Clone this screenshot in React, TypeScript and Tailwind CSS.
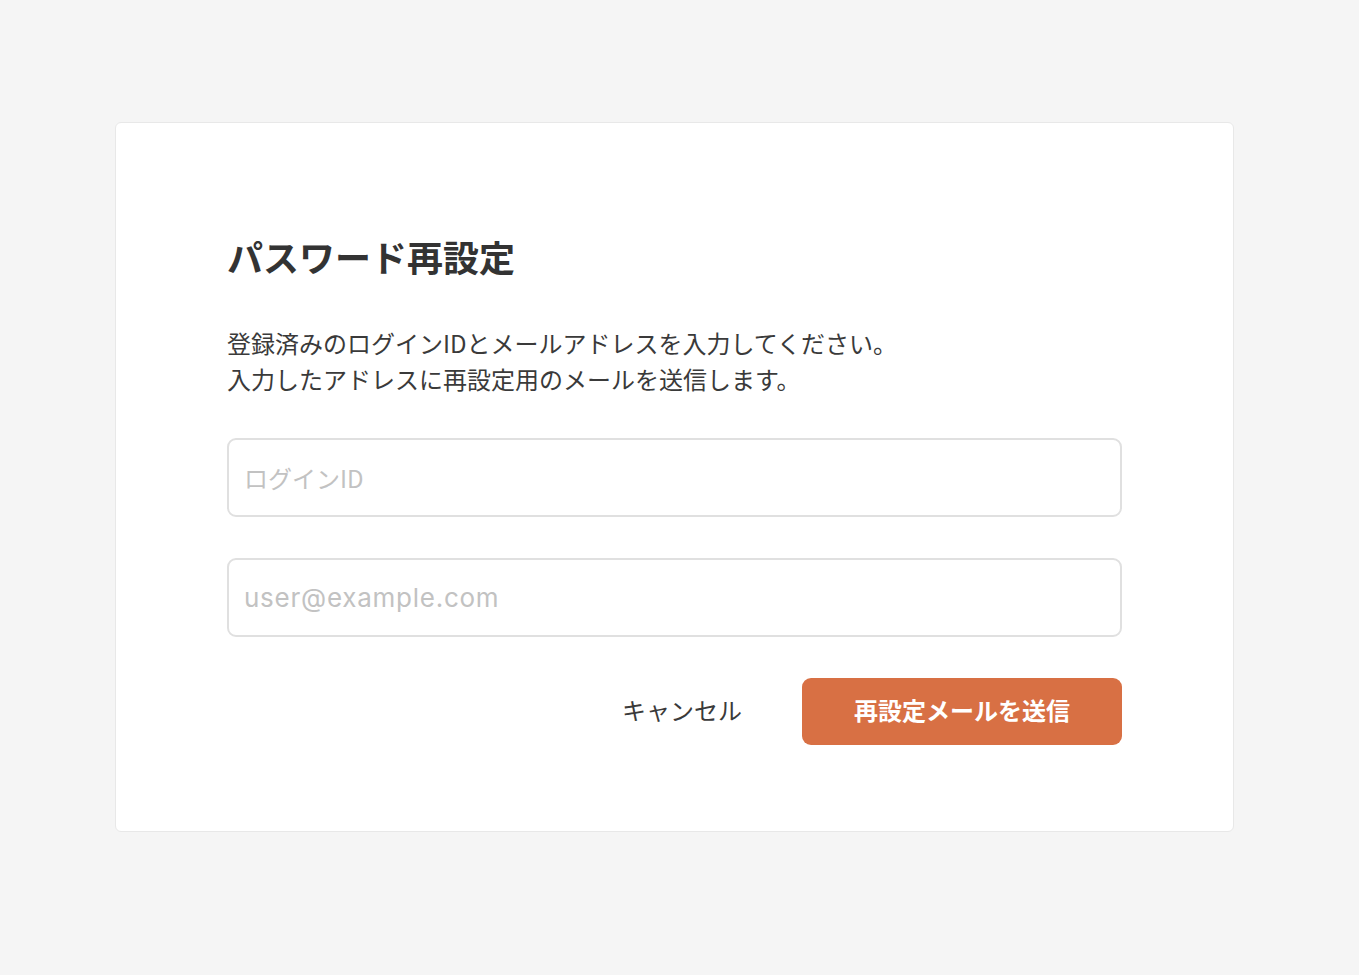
export default function App() {
  const font = { fontFamily: '"Noto Sans CJK JP", "Noto Sans", sans-serif' };
  return (
    <div className="min-h-[975px] w-full bg-[#f5f5f5] pt-[122px] pl-[115px]" style={font}>
      <div className="w-[1119px] rounded-[6px] border border-[#e8e8e8] bg-white px-[111px] pt-[107px] pb-[86px]">
        <h1 className="text-[36px] leading-[52px] font-bold text-[#333333]">パスワード再設定</h1>
        <p className="mt-[43px] text-[24px] leading-[36px] text-[#3a3a3a]">
          登録済みのログインIDとメールアドレスを入力してください。
          <br />
          入力したアドレスに再設定用のメールを送信します。
        </p>
        <input
          type="text"
          placeholder="ログインID"
          className="mt-[41px] block h-[79px] w-full rounded-[9px] border-2 border-[#e0e0e0] bg-white px-[15px] text-[24px] text-[#333] placeholder:text-[#c2c2c2] outline-none"
        />
        <input
          type="email"
          placeholder="user@example.com"
          className="mt-[41px] block h-[79px] w-full rounded-[9px] border-2 border-[#e0e0e0] bg-white px-[15px] text-[26px] tracking-[0.75px] text-[#333] placeholder:text-[#c2c2c2] outline-none font-['Inter','Noto_Sans_CJK_JP',sans-serif]"
        />
        <div className="mt-[41px] flex items-center justify-end gap-[40px]">
          <button className="h-[67px] w-[160px] pb-[3px] text-[24px] text-[#3a3a3a]">キャンセル</button>
          <button className="h-[67px] w-[320px] rounded-[9px] bg-[#d87044] pb-[3px] text-[24px] font-bold text-white">
            再設定メールを送信
          </button>
        </div>
      </div>
    </div>
  );
}
